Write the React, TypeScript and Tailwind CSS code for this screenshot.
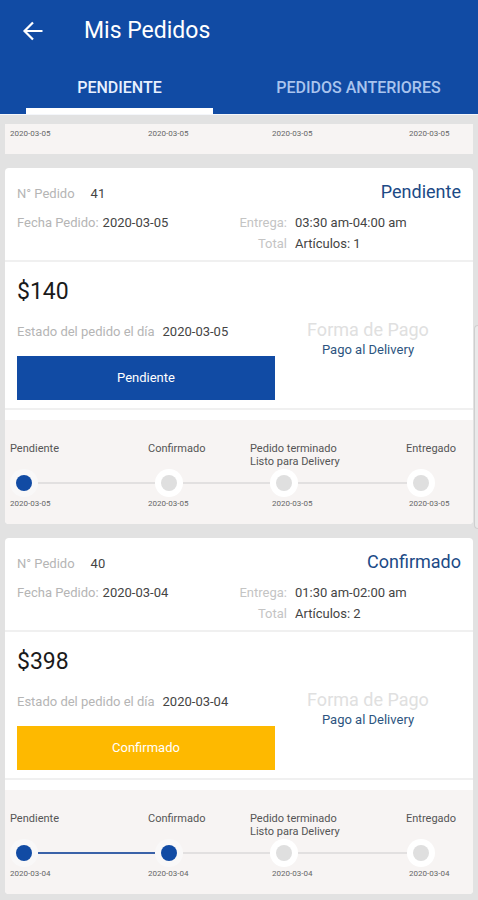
import React, { useState } from 'react';

interface Order {
  id: number;
  status: 'Pendiente' | 'Confirmado';
  date: string;
  delivery: string;
  items: number;
  total: number;
  step: number;
}

const ORDERS: Order[] = [
  { id: 41, status: 'Pendiente', date: '2020-03-05', delivery: '03:30 am-04:00 am', items: 1, total: 140, step: 0 },
  { id: 40, status: 'Confirmado', date: '2020-03-04', delivery: '01:30 am-02:00 am', items: 2, total: 398, step: 1 },
];

const TABS = ['PENDIENTE', 'PEDIDOS ANTERIORES'];

// space between one step and the next
const LINE_GROW = ['grow-[117]', 'grow-[87]', 'grow-[109]'];

function StepDates({ date }: { date: string }) {
  return (
    <div className="grid grid-cols-[138fr_124fr_137fr_64fr] pl-[5px] text-[8px] leading-[14px] text-[#666]">
      {[0, 1, 2, 3].map((i) => (
        <time key={i} dateTime={date}>{date}</time>
      ))}
    </div>
  );
}

function Timeline({ step, date }: { step: number; date: string }) {
  return (
    <div className="bg-[#f7f4f3] pt-[22px] pb-[13px]">
      <div className="grid h-[27px] grid-cols-[138fr_102fr_156fr_67fr] pl-[5px] text-[11px] leading-[13px] text-[#555]">
        <span>Pendiente</span>
        <span>Confirmado</span>
        <span>
          Pedido terminado
          <br />
          Listo para Delivery
        </span>
        <span>Entregado</span>
      </div>
      <div className="flex items-center pr-[38px] pl-[5px]">
        {[0, 1, 2, 3].map((i) => (
          <React.Fragment key={i}>
            {i > 0 && (
              <div className={`h-[2px] basis-0 ${LINE_GROW[i - 1]} ${i <= step ? 'bg-[#3a62a8]' : 'bg-[#e2e0e0]'}`} />
            )}
            <div className={`flex size-7 shrink-0 items-center justify-center rounded-full ${i <= step ? 'bg-[#f9f8f8]' : 'bg-white'}`}>
              <div className={`size-4 rounded-full ${i <= step ? 'bg-[#114ba4]' : 'bg-[#dfdfdf]'}`} />
            </div>
          </React.Fragment>
        ))}
      </div>
      <StepDates date={date} />
    </div>
  );
}

function OrderCard({ order }: { order: Order }) {
  return (
    <article className="overflow-hidden rounded bg-white">
      <div className="border-b-2 border-[#f0f0f0] px-3 pt-3 pb-[6px] text-[13px] text-[#444]">
        <div className="flex h-7 items-start justify-between">
          <div className="flex gap-4 leading-7">
            <span className="text-[#b5b5b5]">N° Pedido</span>
            <span>{order.id}</span>
          </div>
          <h2 className="text-lg leading-6 text-[#1c4a86]">{order.status}</h2>
        </div>
        <div className="grid grid-cols-2 pt-1 leading-[21px]">
          <div className="flex gap-1">
            <span className="text-[#b5b5b5]">Fecha Pedido:</span>
            <span>{order.date}</span>
          </div>
          <div>
            <div className="flex gap-2">
              <span className="w-12 text-right text-[#c4c4c4]">Entrega:</span>
              <span>{order.delivery}</span>
            </div>
            <div className="flex gap-2">
              <span className="w-12 text-right text-[#c4c4c4]">Total</span>
              <span>Artículos: {order.items}</span>
            </div>
          </div>
        </div>
      </div>

      <div className="grid grid-cols-[258fr_186fr] border-b-2 border-[#f0f0f0] px-3 pt-[14px] pb-2">
        <div>
          <p className="text-[23px] leading-8 text-[#1a1a1a]">${order.total}</p>
          <div className="flex gap-2 pt-[14px] text-[13px] leading-5">
            <span className="text-[#b5b5b5]">Estado del pedido el día</span>
            <span className="text-[#444]">{order.date}</span>
          </div>
          <button
            type="button"
            className={`mt-[14px] h-11 w-full text-[13px] text-white ${order.status === 'Pendiente' ? 'bg-[#114ba4]' : 'bg-[#feb900]'}`}
          >
            {order.status}
          </button>
        </div>
        <div className="pt-[42px] text-center">
          <p className="text-lg leading-6 text-[#e0e0e0]">Forma de Pago</p>
          <p className="text-[13px] leading-4 text-[#2d5580]">Pago al Delivery</p>
        </div>
      </div>

      <div className="pt-[10px]">
        <Timeline step={order.step} date={order.date} />
      </div>
    </article>
  );
}

export default function App() {
  const [tab, setTab] = useState(0);

  return (
    <div className="relative min-h-screen bg-[#e2e2e2] font-['Roboto',sans-serif]">
      <header className="border-b border-[#f4f6fa] bg-[#114ba4] text-white">
        <div className="flex h-[61px] items-center gap-10 pl-[22px]">
          <button type="button" aria-label="Volver">
            <svg className="size-[22px]" viewBox="0 0 22 22" fill="none" stroke="currentColor" strokeWidth="2.2">
              <path d="M20.5 11H3M11 2.500L2.500 11l8.500 8.500" />
            </svg>
          </button>
          <h1 className="text-[23px] leading-8">Mis Pedidos</h1>
        </div>
        <nav className="grid grid-cols-2">
          {TABS.map((label, i) => (
            <button
              key={label}
              type="button"
              onClick={() => setTab(i)}
              className={`mx-[26px] h-[53px] border-b-[6px] pt-[6px] text-base font-medium whitespace-nowrap ${
                tab === i ? 'border-white text-[#e8f0ff]' : 'border-transparent text-[#a9c4ee]'
              }`}
            >
              {label}
            </button>
          ))}
        </nav>
      </header>

      <main className="flex flex-col gap-[14px] px-[5px] pt-[9px] pb-[7px]">
        {/* tail of the card above, scrolled under the header */}
        <div className="bg-[#f7f4f3] pt-[3px] pb-[13px]">
          <StepDates date="2020-03-05" />
        </div>
        {ORDERS.map((order) => (
          <OrderCard key={order.id} order={order} />
        ))}
      </main>

      {/* edge panel handle */}
      <div className="absolute top-[325px] right-0 h-[204px] w-1 rounded-l border border-r-0 border-[#cfcfcf] bg-[#e9e9e9]" />
    </div>
  );
}
